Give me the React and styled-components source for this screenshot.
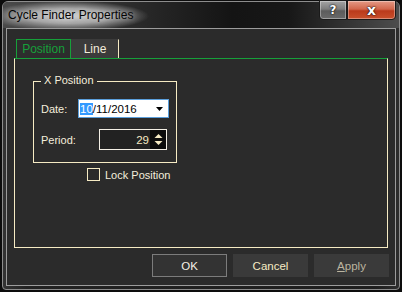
import React from 'react';
import styled, { createGlobalStyle } from 'styled-components';

const cream = '#f6ebc4';
const green = '#16a03a';
const clientBg = '#2b2b2b';

const GlobalStyle = createGlobalStyle`
  html, body {
    margin: 0;
    padding: 0;
    background: #0b0b0b;
  }
  body {
    font-family: "Liberation Sans", Arial, sans-serif;
    font-size: 11px;
  }
`;

const Window = styled.div`
  width: 402px;
  height: 292px;
  box-sizing: border-box;
  padding: 1px 2px 2px;
  background: #0d0d0d;
`;

const Frame = styled.div`
  height: 100%;
  box-sizing: border-box;
  border: 1px solid #8d8d8d;
  border-radius: 6px 6px 4px 4px;
  display: flex;
  flex-direction: column;
  background: linear-gradient(90deg, #343434 0%, #222 6%, #1e1e1e 94%, #2e2e2e 100%);
`;

const TitleBar = styled.div`
  height: 26px;
  flex: none;
  display: flex;
  align-items: flex-start;
  padding: 0 3px 0 5px;
  border-radius: 5px 5px 0 0;
  background:
    radial-gradient(ellipse 80px 15px at 66px 14px, rgba(214, 214, 214, 0.95) 0%, rgba(190, 190, 190, 0.8) 50%, rgba(110, 110, 110, 0) 100%),
    linear-gradient(90deg, #4a4a4a 0%, #262626 38%, #141414 58%, #171717 72%, #4d4d4d 100%);
`;

const TitleText = styled.span`
  align-self: center;
  font-family: "Segoe UI", "Liberation Sans", Arial, sans-serif;
  font-size: 12px;
  color: #050505;
  text-shadow: 0 0 6px rgba(255, 255, 255, 0.6);
  flex: 1;
`;

const CaptionButton = styled.div`
  margin-top: -2px;
  height: 20px;
  width: ${p => p.$w}px;
  box-sizing: border-box;
  display: flex;
  align-items: center;
  justify-content: center;
  border: 1px solid #1a1a1a;
  border-radius: ${p => p.$radius};
  box-shadow: inset 0 0 0 1px rgba(255, 255, 255, 0.35);
  background: ${p => p.$bg};
  color: #fff;
  font-family: "DejaVu Sans", sans-serif;
  font-weight: bold;
  font-size: ${p => p.$size}px;
  line-height: 1;
  text-shadow: 0 0 2px #000, 0 0 1px #000;
`;

const Client = styled.div`
  flex: 1;
  margin: 0 3px 3px;
  border: 1px solid #9c9c9c;
  background: ${clientBg};
  display: flex;
  flex-direction: column;
`;

const TabStrip = styled.div`
  display: flex;
  margin: 10px 0 0 9px;
  height: 19px;
`;

const Tab = styled.div`
  box-sizing: border-box;
  width: ${p => p.$w}px;
  height: 19px;
  display: flex;
  align-items: center;
  justify-content: center;
  font-size: 12px;
  color: ${p => (p.$active ? green : '#f2ecda')};
  background: ${p => (p.$active ? '#2d2d2d' : '#3b3b3b')};
  border: 1px solid ${p => (p.$active ? green : 'transparent')};
  border-bottom: none;
  border-right-color: ${p => (p.$active ? green : cream)};
`;

const Panel = styled.div`
  margin: 0 7px;
  height: 190px;
  box-sizing: border-box;
  border: 1px solid ${cream};
  border-top-color: ${green};
  padding: 22px 0 0 18px;
`;

const GroupBox = styled.div`
  position: relative;
  width: 144px;
  height: 82px;
  box-sizing: border-box;
  border: 1px solid ${cream};
  padding: 17px 7px 0 7px;
  display: flex;
  flex-direction: column;
  gap: 11px;
`;

const Legend = styled.span`
  position: absolute;
  top: -8px;
  left: 7px;
  padding: 0 3px;
  line-height: 13px;
  background: ${clientBg};
  color: #f4eedc;
`;

const FieldRow = styled.div`
  display: flex;
  align-items: center;
  justify-content: space-between;
`;

const Label = styled.span`
  color: #f4eedc;
`;

const DateBox = styled.div`
  width: 91px;
  height: 19px;
  box-sizing: border-box;
  border: 1px solid #5b9fdc;
  background: #fff;
  display: flex;
  align-items: center;
  padding-left: 1px;
  color: #000;
  font-size: 11.5px;
`;

const Selected = styled.span`
  background: #3399ff;
  color: #fff;
  line-height: 12px;
`;

const SpinBox = styled.div`
  width: 68px;
  height: 21px;
  box-sizing: border-box;
  border: 1px solid #f4f0e6;
  background: #222;
  display: flex;
  margin-right: 2px;
`;

const SpinValue = styled.span`
  flex: 1;
  text-align: right;
  align-self: center;
  padding-right: 1px;
  color: ${cream};
  font-size: 11.5px;
`;

const SpinButtons = styled.div`
  width: 16px;
  background: #0c0c0c;
  display: flex;
  align-items: center;
  justify-content: center;
`;

const CheckRow = styled.label`
  display: flex;
  align-items: center;
  margin: 5px 0 0 54px;
  color: #f4eedc;
`;

const CheckBox = styled.span`
  width: 13px;
  height: 13px;
  box-sizing: border-box;
  border: 1px solid ${cream};
  margin-right: 5px;
`;

const ButtonRow = styled.div`
  display: flex;
  justify-content: flex-end;
  gap: 6px;
  padding: 6px 6px 8px;
`;

const Button = styled.button`
  width: 75px;
  height: 23px;
  box-sizing: border-box;
  font-family: "Liberation Sans", Arial, sans-serif;
  font-size: 11.5px;
  background: ${p => (p.$default ? '#333' : '#3a3a3a')};
  border: 1px solid ${p => (p.$default ? '#7c7c7c' : '#3a3a3a')};
  color: ${p => p.$color};
  padding: 0;
  u { text-decoration: underline; }
`;

export default function App() {
  return (
    <>
      <GlobalStyle />
      <Window>
        <Frame>
          <TitleBar>
            <TitleText>Cycle Finder Properties</TitleText>
            <CaptionButton
              $w={28}
              $size={12}
              $radius="0 0 0 4px"
              $bg="linear-gradient(#a4a4a4 0%, #7d7d7d 45%, #5c5c5c 55%, #6a6a6a 100%)"
            >
              ?
            </CaptionButton>
            <CaptionButton
              $w={49}
              $size={14}
              $radius="0 0 4px 0"
              $bg="linear-gradient(#e49a86 0%, #d2674c 45%, #bb3a1c 55%, #c9502c 100%)"
            >
              x
            </CaptionButton>
          </TitleBar>
          <Client>
            <TabStrip>
              <Tab $w={55} $active>Position</Tab>
              <Tab $w={48}>Line</Tab>
            </TabStrip>
            <Panel>
              <GroupBox>
                <Legend>X Position</Legend>
                <FieldRow>
                  <Label>Date:</Label>
                  <DateBox>
                    <Selected>10</Selected>/11/2016
                    <svg width="7" height="4" viewBox="0 0 7 4" style={{ marginLeft: 'auto', marginRight: 5 }}>
                      <path d="M0 0h7L3.5 4z" fill="#000" />
                    </svg>
                  </DateBox>
                </FieldRow>
                <FieldRow>
                  <Label>Period:</Label>
                  <SpinBox>
                    <SpinValue>29</SpinValue>
                    <SpinButtons>
                      <svg width="9" height="13" viewBox="0 0 9 13">
                        <path d="M0.5 5L4.5 1L8.5 5z" fill={cream} />
                        <path d="M0.5 8L4.5 12L8.5 8z" fill={cream} />
                      </svg>
                    </SpinButtons>
                  </SpinBox>
                </FieldRow>
              </GroupBox>
              <CheckRow>
                <CheckBox />
                Lock Position
              </CheckRow>
            </Panel>
            <ButtonRow>
              <Button $default $color="#f5f1e6">OK</Button>
              <Button $color={cream}>Cancel</Button>
              <Button $color="#bcb5a0"><u>A</u>pply</Button>
            </ButtonRow>
          </Client>
        </Frame>
      </Window>
    </>
  );
}
